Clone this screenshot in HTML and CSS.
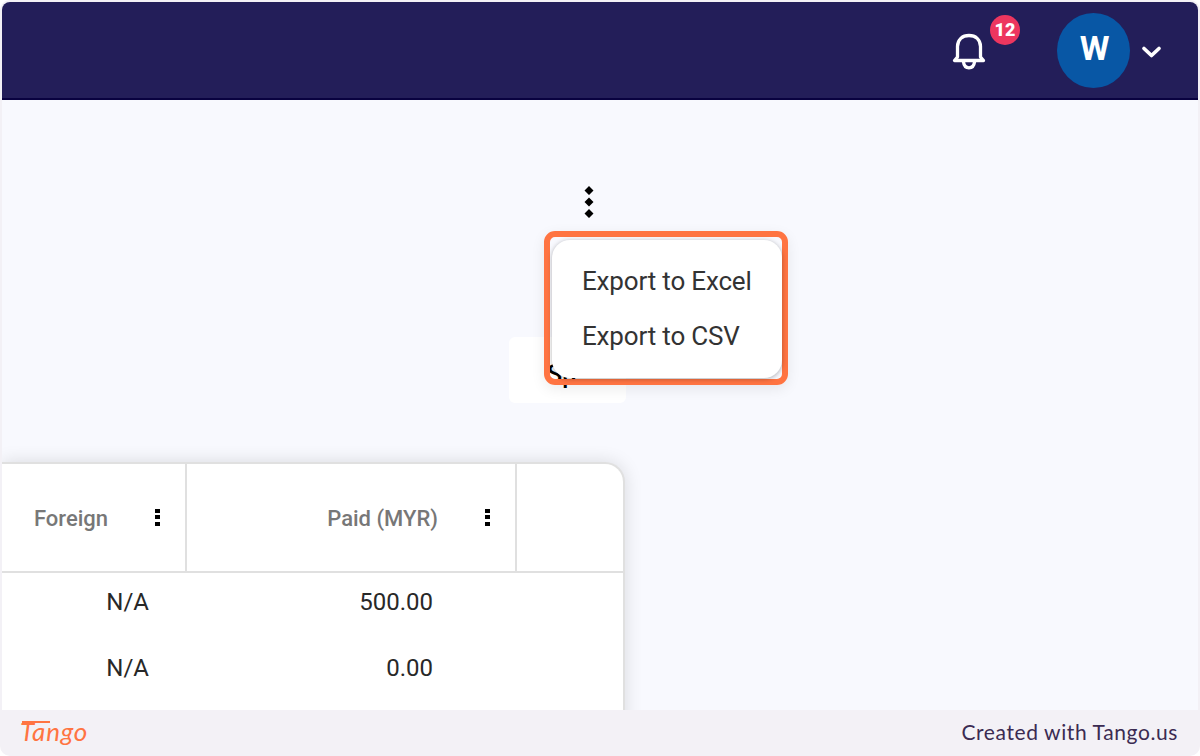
FILE: index.html
```
<!DOCTYPE html>
<html lang="en">
<head>
  <meta charset="UTF-8" />
  <meta name="viewport" content="width=device-width, initial-scale=1" />
  <title>Export options</title>
  <link rel="stylesheet" href="styles.css">
</head>
<body>
  <div class="frame">
    <div class="screen">
      <header class="topbar">
        <div class="bell">
          <svg width="36" height="40" viewBox="0 0 36 40" fill="none" stroke="#fff" stroke-width="3.300" stroke-linejoin="round" stroke-linecap="round">
            <path d="M3.500 29.500H32.500L29.500 26V15.500C29.500 8.500 24.500 4.500 18 4.500S6.500 8.500 6.500 15.500V26Z" />
            <path d="M12.500 31C13.500 38.700 22.500 38.700 23.500 31" />
          </svg>
          <span class="badge">12</span>
        </div>
        <div class="avatar">W</div>
        <svg class="chevron" width="22" height="16" viewBox="0 0 22 16" fill="none" stroke="#fff" stroke-width="3.700" stroke-linecap="round" stroke-linejoin="round">
          <path d="M4 4.500L11.500 11.500L19 4.500" />
        </svg>
      </header>

      <main class="content">
        <div class="toolbar">
          <svg class="kebab" width="10" height="32" viewBox="0 0 10 32">
            <path d="M5 0L9.500 4.500L5 9L.5 4.500ZM5 11.500L9.500 16L5 20.500L.5 16ZM5 23L9.500 27.500L5 32L.5 27.500Z" />
          </svg>
          <button class="split-btn">Sp</button>
          <div class="highlight">
            <div class="menu">
              <div class="menu-item">Export to Excel</div>
              <div class="menu-item">Export to CSV</div>
            </div>
          </div>
        </div>

        <div class="grid">
          <div class="grid-head">
            <div class="cell foreign"><span>Foreign</span><i class="dots"></i></div>
            <div class="cell paid"><span>Paid (MYR)</span><i class="dots"></i></div>
            <div class="cell last"></div>
          </div>
          <div class="grid-row"><span class="val-foreign">N/A</span><span class="val-paid">500.00</span></div>
          <div class="grid-row"><span class="val-foreign">N/A</span><span class="val-paid">0.00</span></div>
        </div>
      </main>
    </div>

    <footer class="footer">
      <span class="logo">Tango</span>
      <span class="credit">Created with Tango.us</span>
    </footer>
  </div>
</body>
</html>
```
FILE: styles.css
```
* {
  box-sizing: border-box;
}

body {
  margin: 0;
  font-family: Roboto, sans-serif;
  background: #fff;
}

.frame {
  width: 1200px;
  height: 756px;
  padding: 2px 2px 0;
  border-radius: 10px;
  background: #f3f1f6;
  overflow: hidden;
}

.screen {
  height: 708px;
  border-radius: 8px 8px 0 0;
  background: #f8f9fe;
  overflow: hidden;
}

.topbar {
  height: 98px;
  display: flex;
  justify-content: flex-end;
  align-items: flex-start;
  padding-right: 36px;
  background: #231e59;
  border-bottom: 2px solid #090240;
}

.bell {
  position: relative;
  margin: 29px 70px 0 0;
  height: 40px;
}

.badge {
  position: absolute;
  left: 39px;
  top: -16px;
  width: 30px;
  height: 30px;
  border-radius: 50%;
  background: #ed365f;
  color: #fff;
  font-size: 18px;
  font-weight: 900;
  line-height: 30px;
  text-align: center;
}

.avatar {
  width: 73px;
  height: 75px;
  margin-top: 11px;
  border-radius: 50%;
  background: #0857a5;
  color: #fff;
  font-size: 34px;
  font-weight: 700;
  line-height: 70px;
  text-align: center;
  text-indent: 2px;
}

.chevron {
  margin: 42px 0 0 10px;
}

.toolbar {
  position: relative;
  height: 362px;
  padding: 86px 0 0 507px;
}

.kebab {
  display: block;
  margin-left: 75px;
}

.split-btn {
  display: block;
  width: 117px;
  height: 66px;
  margin-top: 119px;
  padding: 9px 0 0 38px;
  border: 0;
  border-radius: 6px;
  background: #fff;
  color: #000;
  font-family: Roboto, sans-serif;
  font-size: 25px;
  font-weight: 500;
  text-align: left;
}

/* menu floats over the button below it */
.highlight {
  position: absolute;
  left: 542px;
  top: 131px;
  width: 244px;
  height: 154px;
  padding: 3px 0 0 2px;
  border: 6px solid #ff7442;
  border-radius: 11px;
  box-shadow: 0 4px 14px rgba(0, 0, 0, 0.08);
}

.menu {
  width: 230px;
  height: 138px;
  padding: 17px 0 0 30px;
  border-radius: 18px;
  background: #fff;
  box-shadow: 0 1px 5px rgba(0, 0, 0, 0.3);
}

.menu-item {
  height: 55px;
  line-height: 48px;
  font-size: 26px;
  letter-spacing: -0.17px;
  color: #333;
  white-space: nowrap;
}

.grid {
  width: 623px;
  height: 270px;
  border: 2px solid #e0e0e0;
  border-left: 0;
  border-top-right-radius: 20px;
  background: #fff;
  box-shadow: 0 0 18px rgba(0, 0, 0, 0.13);
}

.grid-head {
  display: flex;
  height: 109px;
  margin-bottom: -4px;
  border-bottom: 2px solid #e0e0e0;
}

.cell {
  display: flex;
  align-items: center;
  justify-content: flex-end;
  padding: 1px 25px 0 0;
  border-right: 2px solid #e0e0e0;
  color: #777;
  font-size: 22px;
  font-weight: 500;
}

.foreign {
  width: 185px;
}

.paid {
  width: 330px;
}

.last {
  border: 0;
}

.dots {
  width: 5px;
  height: 17px;
  margin: 0 0 2px 47px;
  background: linear-gradient(#000 0 4px, transparent 4px 6px, #000 6px 10px, transparent 10px 13px, #000 13px 17px);
}

.grid-row {
  display: flex;
  height: 66px;
  line-height: 66px;
  font-size: 24px;
  color: #282828;
}

.val-foreign {
  width: 147px;
  text-align: right;
}

.val-paid {
  width: 284px;
  text-align: right;
}

.footer {
  display: flex;
  justify-content: space-between;
  height: 46px;
  padding: 0 20px 0 18px;
}

.logo {
  position: relative;
  font-family: Lato, sans-serif;
  font-size: 26px;
  font-style: italic;
  font-weight: 400;
  line-height: 42px;
  letter-spacing: 0.8px;
  color: #ff7442;
}

/* long crossbar of the wordmark */
.logo::before {
  content: "";
  position: absolute;
  left: 2px;
  top: 11px;
  width: 28px;
  height: 2px;
  background: #ff7442;
}

.credit {
  font-family: Lato, sans-serif;
  font-size: 21px;
  line-height: 44px;
  letter-spacing: 0.6px;
  color: #3b2b52;
}
```
